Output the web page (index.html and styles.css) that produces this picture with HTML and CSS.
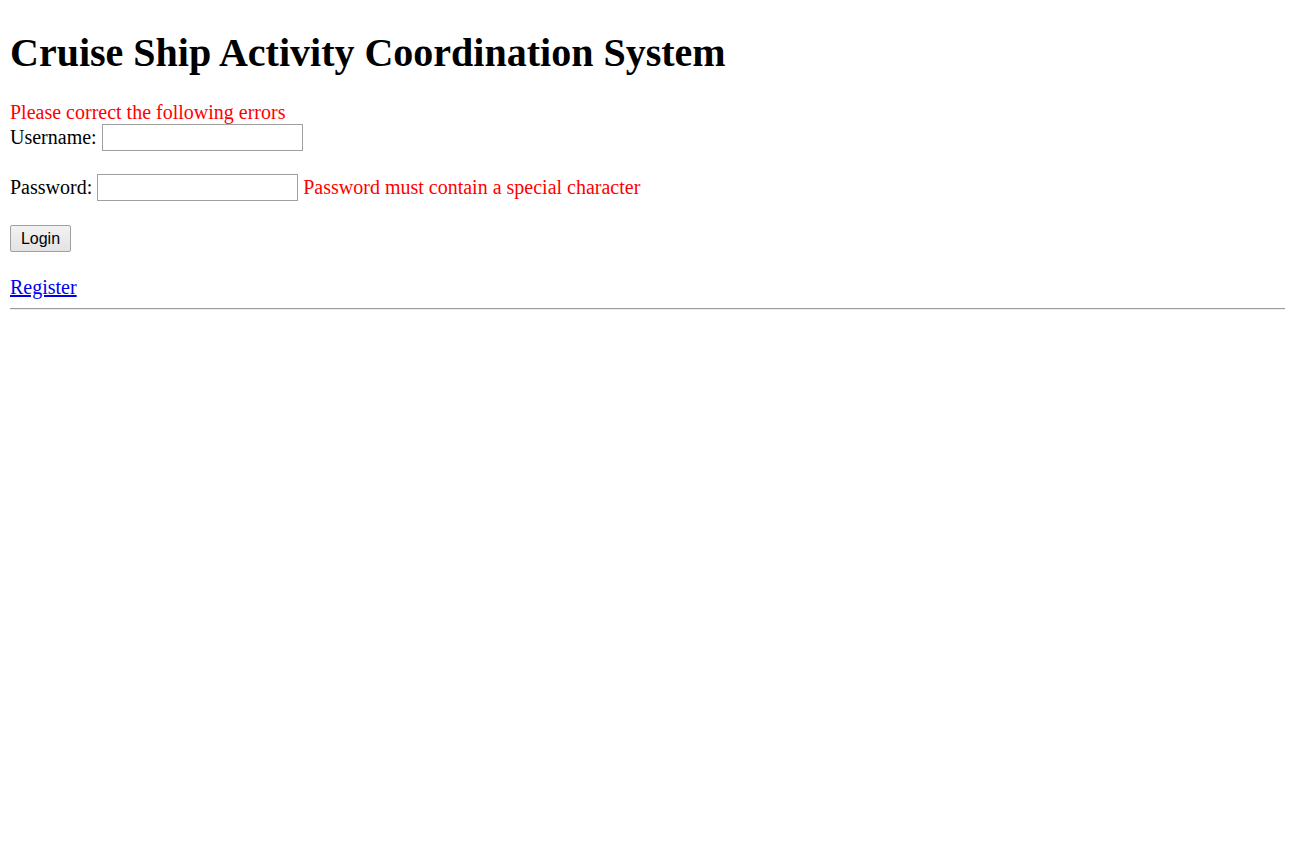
FILE: index.html
```html
<!DOCTYPE html>
<html>
<head>
<meta charset="utf-8">
<title>Cruise Ship Activity Coordination System</title>
<link rel="stylesheet" href="styles.css">
</head>
<body>
<h1 class="title">Cruise Ship Activity Coordination System</h1>
<div class="error">Please correct the following errors</div>
<form class="login-form">
  <div class="row row-user">
    <label class="label" for="username">Username:</label>
    <input class="field" type="text" id="username">
  </div>
  <div class="row row-pass">
    <label class="label" for="password">Password:</label>
    <input class="field" type="password" id="password">
    <span class="error">Password must contain a special character</span>
  </div>
  <div class="row row-btn">
    <button class="btn" type="button">Login</button>
  </div>
</form>
<div class="row-link"><a class="link" href="#">Register</a></div>
<hr class="rule">
</body>
</html>
```
FILE: styles.css
```css
html, body {
  background: #fff;
}
body {
  margin: 10px;
  font-family: "Liberation Serif", "Times New Roman", serif;
  font-size: 20px;
  line-height: 23px;
  color: #000;
}
.title {
  font-size: 40px;
  font-weight: bold;
  margin: 0;
  padding-top: 20px;
  line-height: 46px;
  margin-bottom: 25px;
}
.error {
  color: #ff0000;
}
.login-form {
  margin: 0;
}
.row {
  display: flex;
  align-items: center;
  gap: 5px;
}
.label {
  display: inline-block;
}
.field {
  box-sizing: border-box;
  width: 201px;
  height: 27px;
  border: 1px solid #a0a0a0;
  border-radius: 0;
  padding: 1px 3px;
  font-size: 16px;
  background: #fff;
  margin: 0;
}
.row-user {
  margin-top: 0;
}
.row-pass {
  margin-top: 23px;
}
.row-btn {
  margin-top: 24px;
}
.btn {
  box-sizing: border-box;
  width: 61px;
  height: 27px;
  font-family: "Liberation Sans", Arial, sans-serif;
  font-size: 16px;
  color: #000;
  background: linear-gradient(#f2f2f2, #e3e3e3);
  border: 1px solid #a0a0a0;
  border-radius: 2px;
  padding: 0;
  margin: 0;
}
.row-link {
  margin-top: 24px;
}
.link {
  color: #0000ee;
  text-decoration: underline;
}
.rule {
  margin: 9px 0 0;
  border: 0;
  border-top: 1px solid #9a9a9a;
  border-bottom: 1px solid #eeeeee;
  height: 0;
}
```
